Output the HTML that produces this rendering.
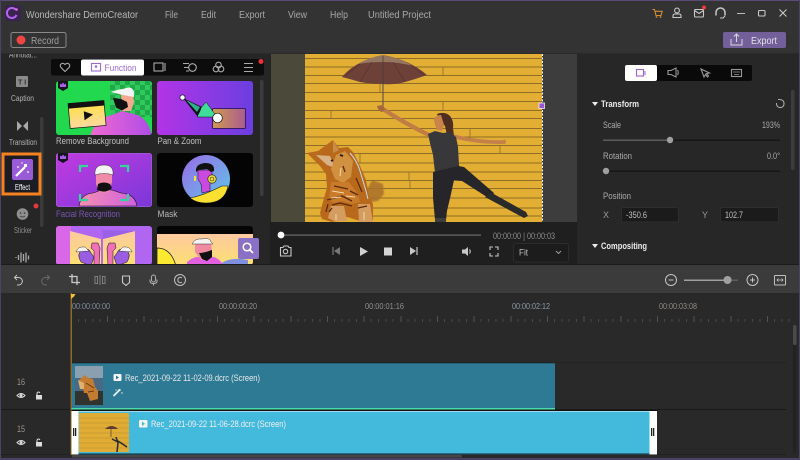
<!DOCTYPE html>
<html><head><meta charset="utf-8"><style>
html,body{margin:0;padding:0;width:800px;height:460px;overflow:hidden;background:#333}
svg{display:block}
text{font-family:"Liberation Sans",sans-serif;font-size:9px;fill:#b4b4b4}
.ic{fill:none;stroke:#c8c8c8;stroke-width:1.1}
</style></head><body>
<svg width="800" height="460" viewBox="0 0 800 460" xmlns="http://www.w3.org/2000/svg">
<defs>
<filter id="bl" x="-5%" y="-5%" width="110%" height="110%"><feGaussianBlur stdDeviation="0.35"/></filter>
<filter id="bl2" x="-10%" y="-10%" width="120%" height="120%"><feGaussianBlur stdDeviation="0.9"/></filter>
<linearGradient id="pz" x1="0" y1="0" x2="1" y2="0"><stop offset="0" stop-color="#b234e6"/><stop offset="1" stop-color="#6b3fe0"/></linearGradient>
<linearGradient id="fr" x1="0" y1="0" x2="1" y2="1"><stop offset="0" stop-color="#c23be0"/><stop offset="1" stop-color="#7a38d8"/></linearGradient>
<linearGradient id="sh" x1="0" y1="0" x2="1" y2="0"><stop offset="0" stop-color="#f06ad0"/><stop offset="1" stop-color="#b04ce8"/></linearGradient>
<linearGradient id="sk" x1="0" y1="0" x2="1" y2="0"><stop offset="0" stop-color="#f58fb0"/><stop offset="1" stop-color="#d060e0"/></linearGradient>
<linearGradient id="yl" x1="0" y1="0" x2="0" y2="1"><stop offset="0" stop-color="#ffe040"/><stop offset="1" stop-color="#fbd9a0"/></linearGradient>
<linearGradient id="ms" x1="0" y1="0" x2="1" y2="1"><stop offset="0" stop-color="#9a6ae8"/><stop offset="1" stop-color="#5cc8e8"/></linearGradient>
<linearGradient id="pk" x1="0" y1="0" x2="0" y2="1"><stop offset="0" stop-color="#fdc9a0"/><stop offset="1" stop-color="#fde070"/></linearGradient>
<linearGradient id="rc" x1="0" y1="0" x2="1" y2="0"><stop offset="0" stop-color="#d09a50"/><stop offset="1" stop-color="#a85c90"/></linearGradient>
<pattern id="chk" width="10" height="10" patternUnits="userSpaceOnUse"><rect width="10" height="10" fill="#1fa84a"/><rect width="5" height="5" fill="#2fc95c"/><rect x="5" y="5" width="5" height="5" fill="#2fc95c"/></pattern>
<clipPath id="c1"><rect x="56" y="81" width="96" height="54" rx="3"/></clipPath>
<clipPath id="c2"><rect x="157" y="81" width="96" height="54" rx="3"/></clipPath>
<clipPath id="c3"><rect x="56" y="153" width="96" height="54" rx="3"/></clipPath>
<clipPath id="c4"><rect x="157" y="153" width="96" height="54" rx="3"/></clipPath>
<clipPath id="c5"><rect x="56" y="226" width="96" height="39" rx="3"/></clipPath>
<clipPath id="c6"><rect x="157" y="226" width="96" height="39" rx="3"/></clipPath>
<clipPath id="side"><rect x="0" y="54" width="44" height="211"/></clipPath>
<clipPath id="photo"><rect x="305" y="54" width="237" height="168"/></clipPath>
<clipPath id="t1"><rect x="75" y="366" width="28" height="39"/></clipPath>
<clipPath id="t2"><rect x="79" y="413" width="50" height="39"/></clipPath>
</defs>

<!-- base -->
<rect width="800" height="460" fill="#333"/>
<rect width="800" height="1" fill="#5a4a78"/>
<rect x="0" y="53" width="800" height="1" fill="#2a2a2a"/>

<!-- title -->
<rect x="5" y="5" width="16" height="16" rx="3" fill="#3a2350"/>
<path d="M15.500 9.500a5 5 0 1 0 1 5.500" fill="none" stroke="#b565f0" stroke-width="2"/>
<circle cx="16.500" cy="9.500" r="1.300" fill="#e070e0"/>
<text x="26" y="18" textLength="112" lengthAdjust="spacingAndGlyphs" style="font-size:10.500px;fill:#b8b8b8">Wondershare DemoCreator</text>
<text x="165" y="18" textLength="13" lengthAdjust="spacingAndGlyphs" style="font-size:10.500px;fill:#a8a8a8">File</text>
<text x="201" y="18" textLength="15" lengthAdjust="spacingAndGlyphs" style="font-size:10.500px;fill:#a8a8a8">Edit</text>
<text x="239" y="18" textLength="26" lengthAdjust="spacingAndGlyphs" style="font-size:10.500px;fill:#a8a8a8">Export</text>
<text x="288" y="18" textLength="19" lengthAdjust="spacingAndGlyphs" style="font-size:10.500px;fill:#a8a8a8">View</text>
<text x="330" y="18" textLength="18" lengthAdjust="spacingAndGlyphs" style="font-size:10.500px;fill:#a8a8a8">Help</text>
<text x="368" y="18" textLength="63" lengthAdjust="spacingAndGlyphs" style="font-size:10.500px;fill:#a8a8a8">Untitled Project</text>

<!-- window icons -->
<path d="M652.500 9.500h2l1.500 6h5l1.200-4.200h-7" fill="none" stroke="#d98a30" stroke-width="1.100"/><circle cx="656.500" cy="17" r=".9" fill="#d98a30"/><circle cx="660.500" cy="17" r=".9" fill="#d98a30"/>
<circle cx="677" cy="10.500" r="2.400" class="ic"/><path d="M673 17.500v-1.500q0-2 2-2h4q2 0 2 2v1.500z" class="ic"/>
<rect x="694.500" y="9.500" width="9" height="7.500" rx="1" class="ic"/><path d="M694.500 10.500l4.500 3 4.500-3" class="ic"/><circle cx="704" cy="7.500" r="2" fill="#f03a3a"/>
<path d="M716 15.500v-3a4.500 4.500 0 0 1 9 0v3" class="ic" style="stroke-width:1.500"/><path d="M720 18h3l2-2" class="ic"/>
<rect x="737" y="13" width="8" height="1" fill="#bbb"/>
<rect x="758.500" y="10.500" width="6.500" height="5.500" rx="1" class="ic"/>
<path d="M779.500 9.500l7 7m0-7l-7 7" class="ic"/>

<!-- record / export -->
<rect x="11" y="32.500" width="55" height="15" rx="2" fill="#333" stroke="#8a8a8a"/>
<circle cx="21" cy="40" r="4.500" fill="#f04545"/>
<text x="31" y="44" textLength="28" lengthAdjust="spacingAndGlyphs" style="font-size:10px;fill:#a0a0a0">Record</text>
<rect x="723" y="32" width="63" height="16" rx="2" fill="#73609a"/>
<path d="M731 39v6h11v-6M736.500 42v-8m-2.500 2.500l2.500-2.500 2.500 2.500" fill="none" stroke="#d8d8d8" stroke-width="1"/>
<text x="751" y="44" textLength="26" lengthAdjust="spacingAndGlyphs" style="font-size:10px;fill:#e0e0e0">Export</text>

<!-- left panel -->
<rect x="0" y="54" width="270" height="211" fill="#262626"/>
<rect x="0" y="0" width="1" height="460" fill="#4c4266"/>
<g clip-path="url(#side)">
<text x="9" y="57.500" textLength="28" lengthAdjust="spacingAndGlyphs" style="font-size:8px">Annotat...</text>
</g>
<rect x="16" y="76" width="12" height="11" rx="1" fill="#8a8a8a"/><text x="18" y="84.500" style="font-size:7px;font-weight:bold;fill:#333">T I</text>
<text x="11" y="101" textLength="23" lengthAdjust="spacingAndGlyphs" style="font-size:8px">Caption</text>
<path d="M17 121v10l5-5zM28 121v10l-5-5z" fill="#a8a8a8"/>
<text x="9" y="145" textLength="28" lengthAdjust="spacingAndGlyphs" style="font-size:8px">Transition</text>
<rect x="40" y="117" width="3.500" height="110" rx="1.500" fill="#3a3a3a"/>
<rect x="3" y="154" width="37" height="40" fill="#1c1c24" stroke="#f58220" stroke-width="3"/>
<rect x="12" y="159" width="21" height="21" rx="2" fill="#9a5cd6"/>
<path d="M16 176l9-9" stroke="#fff" stroke-width="2.200"/><rect x="24" y="164" width="3" height="3" fill="#fff"/><circle cx="18" cy="167" r=".9" fill="#fff"/><circle cx="28" cy="172" r=".9" fill="#fff"/><circle cx="22" cy="163" r=".7" fill="#fff"/>
<text x="15" y="190" textLength="15" lengthAdjust="spacingAndGlyphs" style="font-size:8px;fill:#fff">Effect</text>
<circle cx="22.500" cy="214" r="5.800" fill="#8f8f8f"/><circle cx="20.500" cy="213" r=".8" fill="#333"/><circle cx="24.500" cy="213" r=".8" fill="#333"/><path d="M20 216q2.500 2 5 0" stroke="#333" fill="none" stroke-width=".7"/>
<circle cx="36" cy="206" r="2.500" fill="#e03a3a"/>
<text x="14" y="233" textLength="18" lengthAdjust="spacingAndGlyphs" style="font-size:8px;fill:#909090">Sticker</text>
<path d="M16 257v1M18.500 255v5M21 252.500v10M23.500 254v7M26 252.500v10M28.500 255.500v4" stroke="#a8a8a8" stroke-width="1.300"/>

<!-- tab bar -->
<rect x="51" y="59" width="213" height="16.500" rx="2" fill="#0c0c0c"/>
<rect x="81" y="59.500" width="63" height="16" rx="2" fill="#fff"/>
<path d="M65 71.500l-4-4q-1.500-2 0-3.500 2-1.500 4 .5 2-2 4-.5 1.500 1.500 0 3.500z" class="ic" style="stroke:#aaa"/>
<rect x="91.500" y="63.500" width="9" height="7.500" class="ic" style="stroke:#9a6ad8"/><circle cx="96" cy="66.500" r="1.300" fill="#9a6ad8"/>
<text x="104.500" y="71" textLength="32" lengthAdjust="spacingAndGlyphs" style="font-size:9.500px;fill:#9a6ad8">Function</text>
<rect x="154" y="63" width="9" height="8" class="ic" style="stroke:#aaa"/><path d="M165 63v8" class="ic" style="stroke:#aaa"/>
<path d="M183 63.500h6M184 67.500h5M186 71h3" class="ic" style="stroke:#aaa"/><circle cx="192.500" cy="67.500" r="3.800" class="ic" style="stroke:#aaa"/>
<circle cx="218.500" cy="65" r="2.800" class="ic" style="stroke:#aaa"/><circle cx="216" cy="69" r="2.800" class="ic" style="stroke:#aaa"/><circle cx="221" cy="69" r="2.800" class="ic" style="stroke:#aaa"/>
<path d="M244 63.500h9M244 67.500h9M244 71.500h9" class="ic" style="stroke:#aaa"/>
<circle cx="261" cy="61.500" r="2.500" fill="#f03030"/>
<rect x="260" y="80" width="3.500" height="116" rx="1.500" fill="#3c3c3c"/>

<!-- card 1 -->
<g clip-path="url(#c1)">
<rect x="56" y="81" width="96" height="54" fill="#22d84e"/>
<rect x="110" y="81" width="42" height="36" fill="url(#chk)"/>
<path d="M90 136q6-18 22-21l10-4 12 3q14 3 18 22z" fill="url(#sh)"/>
<path d="M121 94l12 0 1 8-3 9-9 0z" fill="#f4a890"/>
<path d="M113 98q2 0 8 1l6 3 1 5-6 3.500-6-3z" fill="#111"/>
<path d="M111 92q8-3 12-3 9-4 11 3l0 5-11-2z" fill="#f4f4f4"/>
<g transform="rotate(-5 87 114)"><rect x="69" y="102" width="36" height="25" fill="url(#yl)" stroke="#111" stroke-width=".7"/><rect x="69" y="102" width="36" height="5" fill="#111"/><path d="M84 111l9 4-9 5z" fill="#111"/></g>
</g>
<path d="M58 81h10v7l-5 3-5-3z" fill="#15131c"/><path d="M60 87v-3.500l1.500 1 1.500-2 1.500 2 1.500-1v3.500z" fill="#a860e8"/>
<text x="56" y="144" textLength="73" lengthAdjust="spacingAndGlyphs" style="font-size:9.500px;fill:#c0c0c0">Remove Background</text>

<!-- card 2 -->
<g clip-path="url(#c2)">
<rect x="157" y="81" width="96" height="54" fill="url(#pz)"/>
<rect x="212.500" y="108.500" width="33" height="20" rx="1" fill="url(#rc)" stroke="#3a1a6a"/>
<path d="M183 98l19 9-4 10z" fill="#101018"/>
<path d="M186 100l14 7-3 5z" fill="#2fb08a"/>
<path d="M206 102l11 15-20 0 3-6 1-3z" fill="#3fdc9a" stroke="#111" stroke-width=".5"/>
<circle cx="217.500" cy="118" r="4.800" fill="#fff" stroke="#111" stroke-width=".7"/>
<circle cx="182.500" cy="97.500" r="2.600" fill="#fff" stroke="#111" stroke-width=".7"/>
</g>
<text x="157.500" y="144" textLength="44" lengthAdjust="spacingAndGlyphs" style="font-size:9.500px;fill:#c0c0c0">Pan &amp; Zoom</text>

<!-- card 3 -->
<g clip-path="url(#c3)">
<rect x="56" y="153" width="96" height="54" fill="url(#fr)"/>
<path d="M79 206q2-12 14-13l9-3h10l9 3q14 1 16 13z" fill="url(#sk)" stroke="#111" stroke-width=".6"/>
<path d="M96 168h16v14l-3 10-5 1-5-1-3-8z" fill="#f08aa8"/>
<path d="M98 184q6-3 12 0l2 4q-6 6-15 2z" fill="#111"/>
<path d="M95 175q-1-10 9-10 10 0 9 10-9-3-18 0z" fill="#f4f4f4" stroke="#111" stroke-width=".4"/>
<path d="M80 172v-6h8M120 166h8v6M80 194v6h8M128 194v6h-8" fill="none" stroke="#35d49a" stroke-width="2.200"/>
<rect x="56" y="153" width="96" height="54" rx="3" fill="none" stroke="#a56ad8" stroke-width="1"/>
</g>
<path d="M58 153h10v7l-5 3-5-3z" fill="#15131c"/><path d="M60 159v-3.500l1.500 1 1.500-2 1.500 2 1.500-1v3.500z" fill="#a860e8"/>
<text x="56" y="217" textLength="64" lengthAdjust="spacingAndGlyphs" style="font-size:9.500px;fill:#7c52b8">Facial Recognition</text>

<!-- card 4 -->
<g clip-path="url(#c4)">
<rect x="157" y="153" width="96" height="54" fill="#040404"/>
<circle cx="206" cy="179" r="24" fill="url(#ms)"/>
<path d="M190 198q12-2 32-12l6 0q-3 17-22 17-10 0-16-5z" fill="#fbe030" stroke="#111" stroke-width=".6"/>
<path d="M198 170h14l0 9-2 5v7l-8 2-1-9-3-5z" fill="#c84adf" stroke="#111" stroke-width=".5"/>
<path d="M196 172q-1-8 9-9 10 0 9 8l-3 1-4-3-8 1z" fill="#111"/>
<circle cx="212" cy="179" r="4.200" fill="#f0e040" stroke="#111" stroke-width=".6"/><circle cx="212" cy="179" r="2" fill="none" stroke="#111" stroke-width=".5"/>
<path d="M195 176v5" stroke="#f0e040" stroke-width="2"/>
</g>
<text x="157.500" y="217" textLength="20" lengthAdjust="spacingAndGlyphs" style="font-size:9.500px;fill:#b8b8b8">Mask</text>

<!-- card 5 -->
<g clip-path="url(#c5)">
<rect x="56" y="226" width="96" height="40" fill="#b066f0"/>
<rect x="56" y="226" width="15" height="40" fill="#d868e8"/>
<path d="M70 231l31 8v27h-31zM135 231l-32 8v27h32z" fill="url(#pk)"/>
<path d="M102 230l33 1-32 8z" fill="#9a60e8"/>
<path d="M81 262q-5-8 1-12 7-3 9 3l3 4-3 9z" fill="#9a5ce0" stroke="#111" stroke-width=".5"/>
<path d="M76 252q2-6 9-5l4 4z" fill="#f4f4f4" stroke="#111" stroke-width=".4"/>
<path d="M127 262q5-8-1-12-7-3-9 3l-3 4 3 9z" fill="#9a5ce0" stroke="#111" stroke-width=".5"/>
<path d="M132 252q-2-6-9-5l-4 4z" fill="#f4f4f4" stroke="#111" stroke-width=".4"/>
<path d="M94 266v-15l-3-3 1-5 6 0 2 5-1 18zM113 266v-15l3-3-1-5-6 0-2 5 1 18z" fill="#f070b8" stroke="#111" stroke-width=".5"/>
</g>

<!-- card 6 -->
<g clip-path="url(#c6)">
<rect x="157" y="226" width="96" height="40" fill="#050505"/>
<rect x="157" y="234" width="96" height="32" fill="url(#pk)"/>
<path d="M157 248q14 0 19 18h-19z" fill="#fbe830" stroke="#111" stroke-width=".7"/>
<path d="M218 266q10-10 30-6v6z" fill="#8090e0"/>
<path d="M187 262q5-4 9-5l18 0q6 2 10 9h-37z" fill="#e060e0"/>
<path d="M195 244l16-2 1 12-4 6-7 0-6-8z" fill="#f08aa0"/>
<path d="M199 253q5 0 13-3v7l-5 4-5-2z" fill="#111"/>
<path d="M192 244q3-6 10-5 8-2 9 3l2 2-13 0z" fill="#f4f4f4" stroke="#111" stroke-width=".4"/>
</g>
<rect x="238" y="238" width="21" height="21" rx="2" fill="#8b71c6"/>
<circle cx="247" cy="247" r="3.800" fill="none" stroke="#fff" stroke-width="1.500"/><path d="M250 250l3 3" stroke="#fff" stroke-width="1.600"/>

<!-- preview -->
<rect x="270" y="54" width="307" height="210" fill="#3d3d3d"/>
<rect x="270" y="54" width="1" height="168" fill="#222"/>
<rect x="271" y="54" width="34" height="168" fill="#4b4a3a"/>
<g clip-path="url(#photo)">
<rect x="305" y="54" width="237" height="168" fill="#e3ae34"/>
<g filter="url(#bl)">
<g stroke="#8e6e26" stroke-width="1">
<path d="M305 58.500h237M305 67h237M305 75.500h237M305 83.500h237M305 92.500h237M305 101.500h237M305 110.500h237M305 118.500h237M305 128.500h237M305 137h237M305 145.500h237M305 153.500h237M305 163h237M305 172h237M305 180.500h237M305 188.500h237M305 198h237M305 208h237M305 216h237"/>
<path d="M443 67v8M331 110v8M443 101v10M409 172v8M410 180v8M470 128v10M380 84v8M500 145v8M360 153v10" stroke-width=".8"/>
</g>
<!-- umbrella -->
<path d="M342 77Q355 61 383 55 410 60 427 75 416 79 405 82 394 85 383 84 370 84 360 82 350 79 342 77z" fill="#6d3f38"/>
<path d="M358 64Q370 57 383 55 400 58 413 66 398 62 384 62 370 62 358 64z" fill="#957760"/>
<path d="M383 56v52" stroke="#5c5048" stroke-width="1.100"/>
<path d="M360 82l12-20M405 82l-12-20M383 84v-22M345 76l15-12M424 75l-14-10" stroke="#4a2a28" stroke-width=".5"/>
<!-- woman -->
<path d="M383 109Q404 123 429 135" fill="none" stroke="#c07c44" stroke-width="4.200" stroke-linecap="round"/>
<path d="M377 106q1 5 5 6l3-2-2-5z" fill="#a5683a"/>
<path d="M452 136Q480 143 504 142" fill="none" stroke="#c4804a" stroke-width="3.800" stroke-linecap="round"/>
<path d="M504 139l2 2-3 3z" fill="#c4804a"/>
<path d="M437 114q8-3 13 2 4 5 3 12l1 8-2 7-4-3-3-14-6-7z" fill="#4f2f24"/>
<path d="M434 120q1-5 7-5l3 10-2 6-5-1-2-5z" fill="#c98449"/>
<path d="M428 134l7-3 8 2 7-1 6 5 2 10 1 18 1 4-25 4-2-18-3-12z" fill="#37373b"/>
<path d="M433 172l25-6 6 1 30 26-4 6-28-18-8-1-3 14-4 17-1 9h-11l-2-22z" fill="#28282a"/>
<path d="M492 193l34 19 2 4-4 2-39-21z" fill="#2b2a2a"/>
<path d="M435 218h11v5h-11z" fill="#3c3c3c"/>
</g>
<!-- cat -->
<g filter="url(#bl2)"><path d="M372 180l11 4 1 10-6 7-7 1-8-4z" fill="#a9702c" opacity=".85"/></g>
<g filter="url(#bl)">
<path d="M333 140l6 8 9-1 5 5 7 14 6 14 3 16 4 8 0 16-8 2-8-2-10-3-7 3-8 2-10-3-2-6 4-15 3-10-1-14-6-8-13-13 11-2z" fill="#b8691f"/>
<path d="M316 155l14 1 5 12-8-3z" fill="#d9b184"/>
<path d="M333 140l6 10-6 3z" fill="#c98c48"/>
<path d="M336 155l9-4 8 10-2 16-8 6-8-4-4-10z" fill="#d0913f"/>
<path d="M331 182l18 0 9 12 2 8-8 2-10-3-9 2-4-5z" fill="#c97a2c"/>
<path d="M331 206l13 0 3 15h-13l-6-3zM358 204l12 0 3 18h-14z" fill="#d49c5e"/>
<g stroke="#5a2c0c" stroke-width="1.300" fill="none"><path d="M327 200l15-4 10 5M332 205l8-2 12 3M334 186l14 3M329 212l3-4M358 208l9-2M345 172l-2-6M356 178l6 14M350 191l8 4M328 204l-2 8"/><path d="M331 161l2-1M340 155l3 1" stroke="#2a1a0a" stroke-width="1.800"/></g>
<g stroke="#f4d8a8" stroke-width="1" fill="none"><path d="M332 191l12 2M331 198l10-1M346 196l9 1M336 214v6M364 212v8M341 168l-1 8"/></g>
<path d="M350 153q7 8 10 18l3 10 3 10 2 8" fill="none" stroke="#c0dcec" stroke-width="1"/>
</g>
</g>
<path d="M542.500 54v168" stroke="#fff" stroke-dasharray="2 1.500" stroke-width="1"/>
<rect x="539" y="103" width="5.500" height="5.500" fill="#9a55d8" stroke="#eee" stroke-width=".8"/>

<!-- player -->
<rect x="270" y="222" width="307" height="42" fill="#1f1f1f"/>
<rect x="281" y="234.500" width="200" height="1.200" fill="#6e6e6e"/>
<circle cx="281" cy="235" r="3.400" fill="#fff"/>
<text x="493" y="239" textLength="62" lengthAdjust="spacingAndGlyphs" style="font-size:9px;fill:#8c8c8c">00:00:00 | 00:00:03</text>
<path d="M280.500 247.500h2.500l1-1.500h4l1 1.500h2v8.500h-10.500z" class="ic"/><circle cx="285.500" cy="251.500" r="2.200" class="ic"/>
<path d="M333 247v8" stroke="#777" stroke-width="1.200"/><path d="M340 247v8l-6-4z" fill="#777"/>
<path d="M360 247v9l8-4.500z" fill="#d0d0d0"/>
<rect x="384" y="247.500" width="8" height="8" fill="#d4d4d4"/>
<path d="M410 247v8l6-4z" fill="#c8c8c8"/><path d="M417 247v8" stroke="#c8c8c8" stroke-width="1.200"/>
<path d="M462 249.500h3l3-2.500v9l-3-2.500h-3z" fill="#c8c8c8"/><path d="M469.500 249.500q1.500 2 0 4" class="ic"/>
<path d="M490 250v-3h3M495 247h3v3M498 253v3h-3M493 256h-3v-3" class="ic"/>
<rect x="513.500" y="243.500" width="55" height="18.500" rx="2.500" fill="#1c1c1c" stroke="#2c2c2c"/>
<text x="519" y="255.500" textLength="9" lengthAdjust="spacingAndGlyphs" style="font-size:9px;fill:#c0c0c0">Fit</text>
<path d="M556 251l2.500 2.500 2.500-2.500" fill="none" stroke="#999"/>

<!-- right panel -->
<rect x="577" y="54" width="223" height="210" fill="#272727"/>
<rect x="625" y="65" width="127" height="16" rx="2" fill="#0a0a0a"/>
<rect x="625" y="65" width="32" height="16" rx="2" fill="#fff"/>
<rect x="636.500" y="69.500" width="7" height="6.500" class="ic" style="stroke:#9a60d8"/><path d="M645 71v4" stroke="#9a60d8"/>
<path d="M668 70.500h3l5-2.500v9l-5-2.500h-3zM677.500 70q1.500 2.500 0 5" class="ic" style="stroke:#999"/>
<path d="M701 69l3 8 1.500-2.500 2 2.500 1-1-2-2.500 3-.5z" class="ic" style="stroke:#999"/>
<rect x="731.500" y="69.500" width="10" height="7" class="ic" style="stroke:#999"/><path d="M733 72h7M734 74.500h5" stroke="#999" stroke-width=".7"/>
<path d="M592 102h6l-3 4z" fill="#eee"/>
<text x="601" y="107" textLength="38" lengthAdjust="spacingAndGlyphs" style="font-size:9px;font-weight:bold;fill:#ececec">Transform</text>
<path d="M778 99.500h2q4 .5 4 4a3.800 3.800 0 1 1-7.500-.5" class="ic" style="stroke:#aaa"/>
<text x="603" y="128" textLength="18" lengthAdjust="spacingAndGlyphs" style="font-size:9px;fill:#aaa">Scale</text>
<text x="762" y="128" textLength="18" lengthAdjust="spacingAndGlyphs" style="font-size:9px;fill:#aaa">193%</text>
<rect x="603" y="139.500" width="67" height="1.500" fill="#5c5c5c"/><rect x="670" y="139.500" width="110" height="1.500" fill="#161616"/>
<circle cx="670" cy="140" r="3.200" fill="#a0a0a0"/>
<text x="603" y="159" textLength="29" lengthAdjust="spacingAndGlyphs" style="font-size:9px;fill:#aaa">Rotation</text>
<text x="767" y="159" textLength="13" lengthAdjust="spacingAndGlyphs" style="font-size:9px;fill:#aaa">0.0°</text>
<rect x="606" y="170.500" width="174" height="1.500" fill="#161616"/>
<circle cx="606" cy="171" r="3.200" fill="#a0a0a0"/>
<text x="603" y="199" textLength="28" lengthAdjust="spacingAndGlyphs" style="font-size:9px;fill:#aaa">Position</text>
<text x="603" y="218" style="font-size:9px;fill:#999">X</text>
<rect x="621.500" y="207.500" width="57" height="14.500" rx="2" fill="#1b1b1b" stroke="#2e2e2e"/>
<text x="626" y="218" textLength="21" lengthAdjust="spacingAndGlyphs" style="font-size:9px;fill:#c0c0c0">-350.6</text>
<text x="702" y="218" style="font-size:9px;fill:#999">Y</text>
<rect x="720.500" y="207.500" width="58" height="14.500" rx="2" fill="#1b1b1b" stroke="#2e2e2e"/>
<text x="725" y="218" textLength="18" lengthAdjust="spacingAndGlyphs" style="font-size:9px;fill:#c0c0c0">102.7</text>
<path d="M592 244h6l-3 4z" fill="#eee"/>
<text x="601" y="249" textLength="46" lengthAdjust="spacingAndGlyphs" style="font-size:9px;font-weight:bold;fill:#ececec">Compositing</text>
<rect x="791" y="90" width="3.500" height="80" rx="1.500" fill="#3d3d3d"/>

<!-- timeline toolbar -->
<rect x="1" y="264" width="799" height="1" fill="#1c1c1c"/>
<rect x="1" y="265" width="799" height="28" fill="#3b3b3b"/>
<path d="M17 275l-2.500 2.500 2.500 2.500M15 277.500h4a4 3.800 0 0 1 0 7.500h-2" fill="none" stroke="#c4c4c4" stroke-width="1"/>
<path d="M47 275l2.500 2.500-2.500 2.500M49 277.500h-4a4 3.800 0 0 0 0 7.500h2" fill="none" stroke="#6a6a6a" stroke-width="1"/>
<path d="M69 276.500h8v8.500M72 274v8.500h8" fill="none" stroke="#c8c8c8" stroke-width="1.300"/>
<path d="M95 276.500h2.500v7h-2.500zM102.500 276.500h2.500v7h-2.500z" fill="none" stroke="#808080"/><path d="M100 275v10" stroke="#808080"/>
<path d="M122.500 276h7v6.500l-3.500 3-3.500-3z" fill="none" stroke="#c8c8c8" stroke-width="1.100"/>
<rect x="151.500" y="275" width="4" height="7" rx="2" fill="none" stroke="#b0b0b0"/><path d="M150 279.500v1.500q0 2.500 3.500 2.500t3.500-2.500v-1.500M153.500 283.500v2" fill="none" stroke="#b0b0b0"/>
<circle cx="180" cy="280" r="5.500" fill="none" stroke="#c0c0c0"/><path d="M182 278q-2-1.500-3.500 0-1.200 2 0 4 1.500 1.500 3.500 0" fill="none" stroke="#c0c0c0"/>
<circle cx="671" cy="280" r="5.500" fill="none" stroke="#c4c4c4"/><path d="M668.500 280h5" stroke="#c4c4c4"/>
<rect x="684" y="279.500" width="43" height="1.500" fill="#a0a0a0"/><rect x="727" y="279.500" width="11" height="1.500" fill="#5c5c5c"/>
<circle cx="727.500" cy="280" r="4" fill="#a0a0a0"/>
<circle cx="752.500" cy="280" r="5.500" fill="none" stroke="#c4c4c4"/><path d="M750 280h5M752.500 277.500v5" stroke="#c4c4c4"/>
<rect x="774.500" y="275.500" width="11" height="9.500" rx=".5" fill="none" stroke="#c0c0c0"/><path d="M777 280h6M778.500 278.500l-1.500 1.500 1.500 1.500M781.500 278.500l1.500 1.500-1.500 1.500" fill="none" stroke="#c0c0c0" stroke-width=".8"/>

<!-- timeline -->
<rect x="1" y="293" width="799" height="167" fill="#292929"/>
<text x="72" y="309" textLength="38" lengthAdjust="spacingAndGlyphs" style="font-size:8.500px;fill:#7f8f9f">00:00:00:00</text>
<text x="219" y="309" textLength="38" lengthAdjust="spacingAndGlyphs" style="font-size:8.500px;fill:#909090">00:00:00:20</text>
<text x="365" y="309" textLength="39" lengthAdjust="spacingAndGlyphs" style="font-size:8.500px;fill:#909090">00:00:01:16</text>
<text x="512" y="309" textLength="38" lengthAdjust="spacingAndGlyphs" style="font-size:8.500px;fill:#8c9aa8">00:00:02:12</text>
<text x="659" y="309" textLength="38" lengthAdjust="spacingAndGlyphs" style="font-size:8.500px;fill:#908a84">00:00:03:08</text>
<path d="M78.500 319v3M85.500 319v3M93 319v3M100 319v3M114.500 319v3M122 319v3M129 319v3M136.500 319v3M151 319v3M158.500 319v3M166 319v3M173 319v3M188 319v3M195 319v3M202.500 319v3M210 319v3M224.500 319v3M232 319v3M239 319v3M246.500 319v3M261 319v3M268.500 319v3M276 319v3M283 319v3M298 319v3M305 319v3M312.500 319v3M320 319v3M334.500 319v3M342 319v3M349 319v3M356.500 319v3M371 319v3M378.500 319v3M386 319v3M393 319v3M408 319v3M415 319v3M422.500 319v3M430 319v3M444.500 319v3M452 319v3M459 319v3M466.500 319v3M481 319v3M488.500 319v3M496 319v3M503 319v3M518 319v3M525 319v3M532.500 319v3M540 319v3M554.500 319v3M562 319v3M569 319v3M576.500 319v3M591 319v3M598.500 319v3M606 319v3M613 319v3M628 319v3M635 319v3M642.500 319v3M650 319v3M664.500 319v3M672 319v3M679 319v3M686.500 319v3M701 319v3M708.500 319v3M716 319v3M723 319v3M738 319v3M745 319v3M752.500 319v3M760 319v3M774.500 319v3M782 319v3M789 319v3" stroke="#484848"/>
<path d="M107.500 316v6M144 316v6M181 316v6M217.500 316v6M254 316v6M291 316v6M327.500 316v6M364 316v6M401 316v6M437.500 316v6M474 316v6M511 316v6M547.500 316v6M584 316v6M621 316v6M657.500 316v6M694 316v6M731 316v6M767.500 316v6" stroke="#525252"/>
<rect x="71" y="362" width="715" height="1" fill="#222"/>
<rect x="1" y="409" width="785" height="1" fill="#1a1a1a"/>
<rect x="1" y="454" width="785" height="1" fill="#202020"/>
<rect x="70.500" y="293" width="1.500" height="70" fill="#8c6a2c"/>
<path d="M71 294h4.500l-1.500 2.500-3 2.500z" fill="#f4c030"/>

<!-- track 16 -->
<rect x="71" y="363" width="484" height="45" fill="#2e7a94"/>
<rect x="71" y="363" width="484" height=".8" fill="#1e5c72"/>
<rect x="71" y="363" width="1" height="46" fill="#8c6a2c"/>
<rect x="71" y="408" width="484" height="1.500" fill="#4adca8"/>
<g clip-path="url(#t1)"><g filter="url(#bl)">
<rect x="75" y="366" width="28" height="39" fill="#4a6a82"/>
<rect x="75" y="366" width="28" height="12" fill="#8aa0b0"/>
<rect x="75" y="391" width="28" height="14" fill="#30302e"/>
<path d="M85 375l3 3 5 1 2 8 3 4v8l-8 2-3-8-3 0-2-10-3-3z" fill="#c47c30"/>
<path d="M78 380l6 3 0 6-4 0z" fill="#e0b070"/>
<path d="M86 383l8 5M88 392l6-1" stroke="#6a3a0c"/>
</g></g>
<rect x="113.500" y="374" width="8" height="7" rx="1" fill="#f4f4f4"/><path d="M116 375.500v4l3-2z" fill="#2e7a94"/>
<text x="125" y="381" textLength="135" lengthAdjust="spacingAndGlyphs" style="font-size:9px;fill:#e8e8e8">Rec_2021-09-22 11-02-09.dcrc (Screen)</text>
<path d="M113.500 396l6-6" stroke="#eee" stroke-width="1.800"/><rect x="118.500" y="389" width="2" height="2" fill="#eee"/><circle cx="122" cy="393" r=".7" fill="#eee"/><circle cx="116" cy="390" r=".6" fill="#eee"/>

<!-- track 15 -->
<rect x="71" y="410" width="586" height="45" fill="#111"/>
<rect x="71" y="411" width="586" height="43.500" fill="#fff"/>
<rect x="78.500" y="411.500" width="571" height="42" fill="#43b9dc"/>
<rect x="78.500" y="453" width="571" height="1.500" fill="#2a6f86"/>
<rect x="73" y="428" width="1.300" height="8" fill="#222"/><rect x="75" y="428" width="1.300" height="8" fill="#222"/>
<rect x="651" y="428" width="1.300" height="8" fill="#222"/><rect x="653" y="428" width="1.300" height="8" fill="#222"/>
<g clip-path="url(#t2)">
<rect x="79" y="413" width="50" height="39" fill="#e0ac34"/>
<path d="M79 418h50M79 423h50M79 428h50M79 433h50M79 438h50M79 443h50M79 448h50" stroke="#b08a34" stroke-width=".6"/>
<path d="M105 429q3-3 6.500-3 3.500 0 6.500 3z" fill="#5e3a34"/><path d="M111 429v8" stroke="#4a4038" stroke-width=".7"/>
<path d="M116 437l2 6-1 9M118 441l9 6M112 439l6 3" stroke="#2a2a30" stroke-width="1.500" fill="none"/>
</g>
<rect x="139" y="420" width="8.500" height="7.500" rx="1" fill="#f4f4f4"/><path d="M142 421.500v4.500l3-2.200z" fill="#43b9dc"/>
<text x="151" y="427" textLength="135" lengthAdjust="spacingAndGlyphs" style="font-size:9px;fill:#f0f0f0">Rec_2021-09-22 11-06-28.dcrc (Screen)</text>

<!-- track heads -->
<rect x="70" y="363" width="1" height="92" fill="#1f1f1f"/>
<rect x="70.500" y="363" width="1" height="92" fill="#8c6a2c"/>
<text x="17" y="385" textLength="8" lengthAdjust="spacingAndGlyphs" style="font-size:9px;fill:#a09488">16</text>
<text x="17" y="432" textLength="8" lengthAdjust="spacingAndGlyphs" style="font-size:9px;fill:#a09488">15</text>
<path d="M17 395.500q4-4 8 0-4 4-8 0z" fill="none" stroke="#ddd"/><circle cx="21" cy="395.500" r="1.500" fill="#ddd"/>
<path d="M17 442.500q4-4 8 0-4 4-8 0z" fill="none" stroke="#ddd"/><circle cx="21" cy="442.500" r="1.500" fill="#ddd"/>
<rect x="36" y="395" width="6" height="4.500" fill="#ddd"/><path d="M37 395v-2q1.500-2 3 0" fill="none" stroke="#ddd"/>
<rect x="36" y="442" width="6" height="4.500" fill="#ddd"/><path d="M37 442v-2q1.500-2 3 0" fill="none" stroke="#ddd"/>

<!-- timeline scrollbars / edge -->
<rect x="72" y="455" width="390" height="2.500" rx="1" fill="#474747"/>
<rect x="793" y="325" width="3.500" height="20" rx="1.500" fill="#4a4a4a"/>
<rect x="793" y="345" width="3.500" height="108" fill="#222"/>
<rect x="0" y="458" width="800" height="2" fill="#4c4266"/>
<rect x="799" y="0" width="1" height="460" fill="#4c4266"/>
</svg>
</body></html>
